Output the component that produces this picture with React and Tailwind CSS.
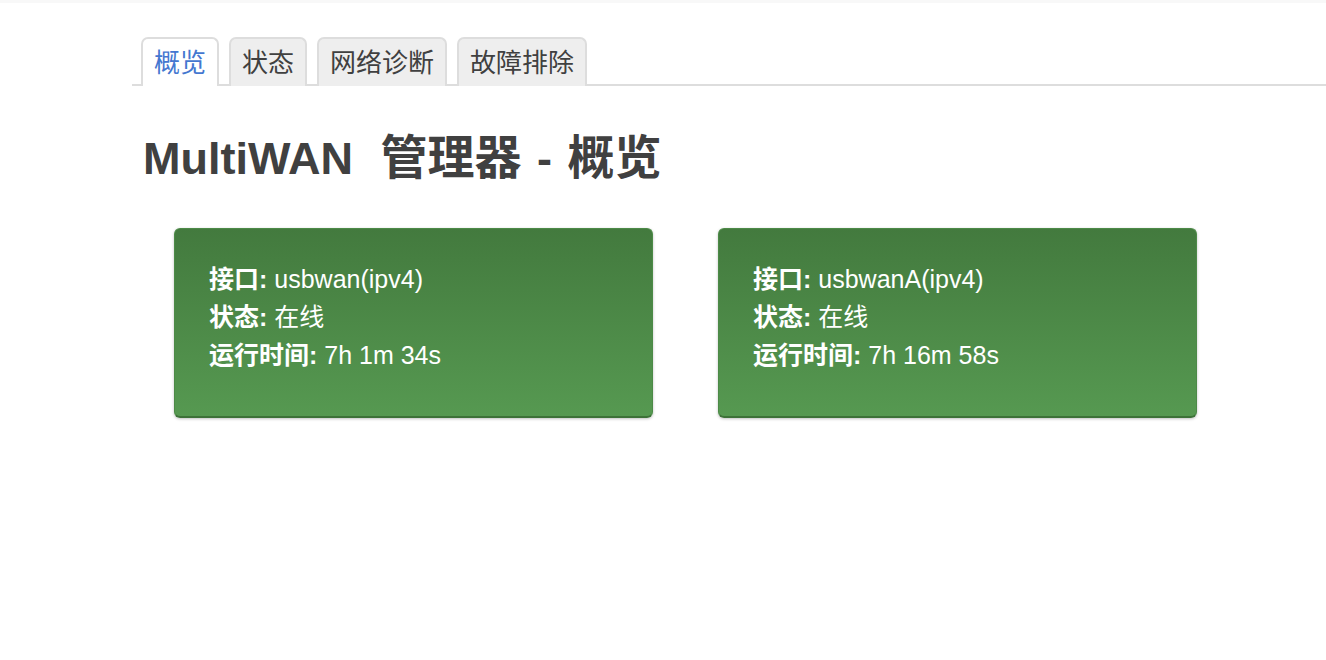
import React from "react";

const TABS = ["概览", "状态", "网络诊断", "故障排除"];

const INTERFACES = [
  { name: "usbwan(ipv4)", status: "在线", uptime: "7h 1m 34s" },
  { name: "usbwanA(ipv4)", status: "在线", uptime: "7h 16m 58s" },
];

const FONT = "font-['Liberation_Sans','Noto_Sans_CJK_SC',sans-serif]";

function Tabs({ active }) {
  return (
    <ul className="flex gap-[10px] border-b-2 border-[#dddddd] pl-[9px]">
      {TABS.map((tab) => {
        const isActive = tab === active;
        return (
          <li
            key={tab}
            className={
              isActive
                ? "-mb-[2px] flex h-[49px] items-center rounded-t-[7px] border-2 border-b-0 border-[#dddddd] bg-white px-[11px] text-[26px] leading-none text-[#4477d0]"
                : "-mb-[2px] flex h-[49px] items-center rounded-t-[7px] border-2 border-b-0 border-[#dddddd] bg-[#eeeeee] px-[11px] text-[26px] leading-none text-[#404040]"
            }
          >
            {tab}
          </li>
        );
      })}
    </ul>
  );
}

function InterfaceCard({ name, status, uptime }) {
  return (
    <div className="h-[190px] w-[479px] rounded-[6px] border border-b-2 border-[#4c8a47] border-b-[#3d7238] bg-gradient-to-b from-[#437a3e] to-[#569951] px-[34px] pt-[31px] text-[25px] leading-[38px] text-white shadow-[0_1px_3px_rgba(0,0,0,0.25)]">
      <div>
        <span className="font-bold">接口:</span> {name}
      </div>
      <div>
        <span className="font-bold">状态:</span> {status}
      </div>
      <div>
        <span className="font-bold">运行时间:</span> {uptime}
      </div>
    </div>
  );
}

export default function App() {
  return (
    <div className={`min-h-[660px] bg-white ${FONT}`}>
      <div className="h-[3px] bg-[#f8f8f8]" />
      <div className="pl-[132px] pt-[34px]">
        <Tabs active="概览" />
        <h2 className="ml-[11px] mt-[45px] text-[45px] font-bold leading-[54px] text-[#404040] [word-spacing:3px]">
          MultiWAN <span className="ml-[12px] text-[47px]">管理器</span> -{" "}
          <span className="text-[47px]">概览</span>
        </h2>
        <div className="ml-[42px] mt-[42px] flex gap-[65px]">
          {INTERFACES.map((item) => (
            <InterfaceCard key={item.name} {...item} />
          ))}
        </div>
      </div>
    </div>
  );
}
